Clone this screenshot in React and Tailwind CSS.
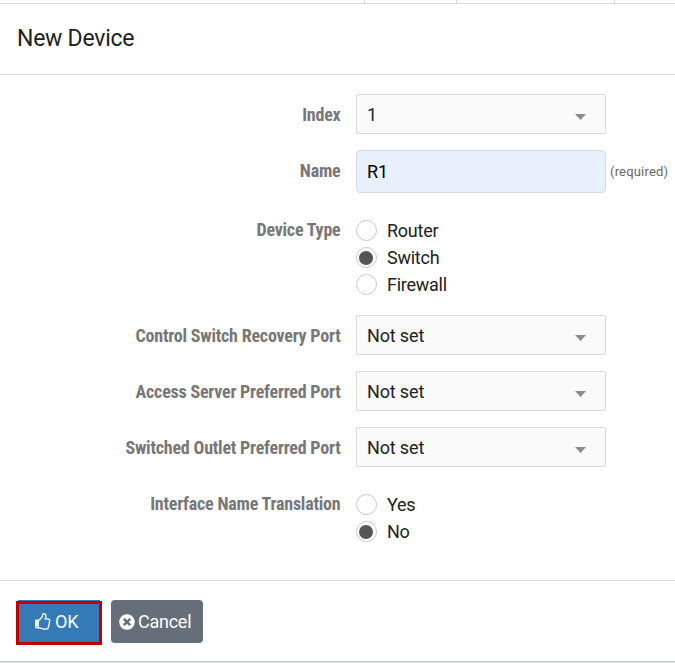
import React, { useState } from "react";
import { FaTimesCircle } from "react-icons/fa";

function Row({ label, className, children }) {
  return (
    <div className={`flex items-start ${className}`}>
      <div className="w-[340.5px] shrink-0 text-right text-[18px] leading-[27px] tracking-[-0.21px] font-bold text-[#777] whitespace-nowrap font-['Roboto_Condensed','Roboto',sans-serif] [font-stretch:75%]">
        {label}
      </div>
      <div className="ml-[15.5px]">{children}</div>
    </div>
  );
}

function Select({ value }) {
  return (
    <button className="flex items-center justify-between w-[250px] h-10 pl-2.5 pr-[19px] bg-[#fafafa] border border-[#d9d9d9] rounded-[2px] text-[18px] tracking-[-0.15px] text-[#212121]">
      <span>{value}</span>
      <svg width="11" height="6" viewBox="0 0 11 6" className="mt-1.5">
        <path d="M0 0h11L5.5 6z" fill="#8c8c8c" />
      </svg>
    </button>
  );
}

function RadioGroup({ options, value, onChange }) {
  return (
    <div className="flex flex-col">
      {options.map((option) => (
        <button key={option} onClick={() => onChange(option)} className="flex items-center h-[27px] text-[18px] tracking-[-0.25px] text-[#212121]">
          <span className="flex items-center w-[21px] h-[21px] mr-2.5 pl-0.5 rounded-full border border-[#c8c8c8] bg-white">
            {value === option && <span className="w-[14px] h-[14px] rounded-full bg-[#555]" />}
          </span>
          {option}
        </button>
      ))}
    </div>
  );
}

function ThumbsUp() {
  return (
    <svg width="16" height="18" viewBox="0 0 1593 1792" fill="currentColor">
      <path d="M256 1344q0-26-19-45t-45-19-45 19-19 45 19 45 45 19 45-19 19-45zm1152-576q0-51-39-89.5t-89-38.5h-352q0-58 48-159.5t48-160.5q0-98-32-145t-128-47q-26 26-38 85t-30.5 125.5-59.5 109.5q-22 23-77 91-4 5-23 30t-31.5 41-34.5 42.5-40 44-38.5 35.5-40 27-35.5 9h-32v640h32q13 0 31.5 3t33 6.5 38 11 35 11.5 35.5 12.5 29 10.5q211 73 342 73h121q192 0 192-167 0-26-5-56 30-16 47.5-52.5t17.5-73.5-18-69q53-50 53-119 0-25-10-55.5t-25-47.5q32-1 53.5-47t21.5-81zm128-1q0 89-49 163 9 33 9 69 0 77-38 144 3 21 3 43 0 101-60 178 1 139-85 219.5t-227 80.5h-129q-96 0-189.5-22.5t-216.5-65.5q-116-40-138-40h-288q-53 0-90.5-37.5t-37.5-90.5v-640q0-53 37.5-90.5t90.5-37.5h274q36-24 137-155 58-75 107-128 24-25 35.5-85.5t30.5-126.5 62-108q39-37 90-37 84 0 151 32.5t102 101.5 35 186q0 93-48 192h176q104 0 180 76t76 179z" />
    </svg>
  );
}

export default function App() {
  const [name, setName] = useState("R1");
  const [deviceType, setDeviceType] = useState("Switch");
  const [translation, setTranslation] = useState("No");

  return (
    <div className="w-[675px] h-[663px] overflow-hidden bg-[#e6e8e8] font-['Roboto',sans-serif]">
      <div className="flex h-1 bg-white border-b border-[#d9d9d9]">
        <div className="w-[365px] border-r border-[#d9d9d9]" />
        <div className="w-[92px] border-r border-[#d9d9d9]" />
        <div className="w-[158px] border-r border-[#d9d9d9]" />
      </div>

      <header className="flex items-center h-[71px] pl-[17px] bg-white border-b border-[#d9d9d9]">
        <h1 className="text-[23px] tracking-[-0.25px] text-[#212121]">New Device</h1>
      </header>

      <main className="h-[505px] pt-[19px] bg-white">
        <Row label="Index" className="h-14 [&>div:first-child]:pt-[7px]">
          <Select value="1" />
        </Row>
        <Row label="Name" className="h-[67px] [&>div:first-child]:pt-[7px]">
          <div className="flex items-center">
            <input
              value={name}
              onChange={(e) => setName(e.target.value)}
              className="w-[250px] h-[43px] px-2.5 bg-[#e8f0fe] border border-[#d9d9d9] rounded-[4px] text-[18px] tracking-[-0.2px] text-black"
            />
            <span className="ml-1 text-[13px] tracking-[0.18px] text-[#666]">(required)</span>
          </div>
        </Row>
        <Row label="Device Type" className="h-[98px] [&>div:first-child]:-mt-px">
          <RadioGroup options={["Router", "Switch", "Firewall"]} value={deviceType} onChange={setDeviceType} />
        </Row>
        <Row label="Control Switch Recovery Port" className="h-14 [&>div:first-child]:pt-[7px]">
          <Select value="Not set" />
        </Row>
        <Row label="Access Server Preferred Port" className="h-14 [&>div:first-child]:pt-[7px]">
          <Select value="Not set" />
        </Row>
        <Row label="Switched Outlet Preferred Port" className="h-16 [&>div:first-child]:pt-[7px]">
          <Select value="Not set" />
        </Row>
        <Row label="Interface Name Translation" className="h-[54px] [&>div:first-child]:-mt-px">
          <RadioGroup options={["Yes", "No"]} value={translation} onChange={setTranslation} />
        </Row>
      </main>

      <footer className="flex h-[82px] pl-4 pt-[19px] bg-white border-t border-b border-t-[#d9d9d9] border-b-[#c4c7c7] text-[18px] tracking-[-0.25px] text-white">
        <div className="w-[86px] h-[45px]">
          <div className="h-px mx-0.5 bg-[#337ab7]" />
          <button className="flex items-center gap-1 w-full h-[44px] pl-4 pb-[3px] bg-[#337ab7] border-3 border-[#c00000]">
            <ThumbsUp />
            OK
          </button>
        </div>
        <button className="flex items-center gap-[3.5px] w-[92px] h-[43px] ml-[9px] pl-[7.5px] bg-[#666e7a] rounded-[4px]">
          <FaTimesCircle size={16} />
          Cancel
        </button>
      </footer>
    </div>
  );
}
